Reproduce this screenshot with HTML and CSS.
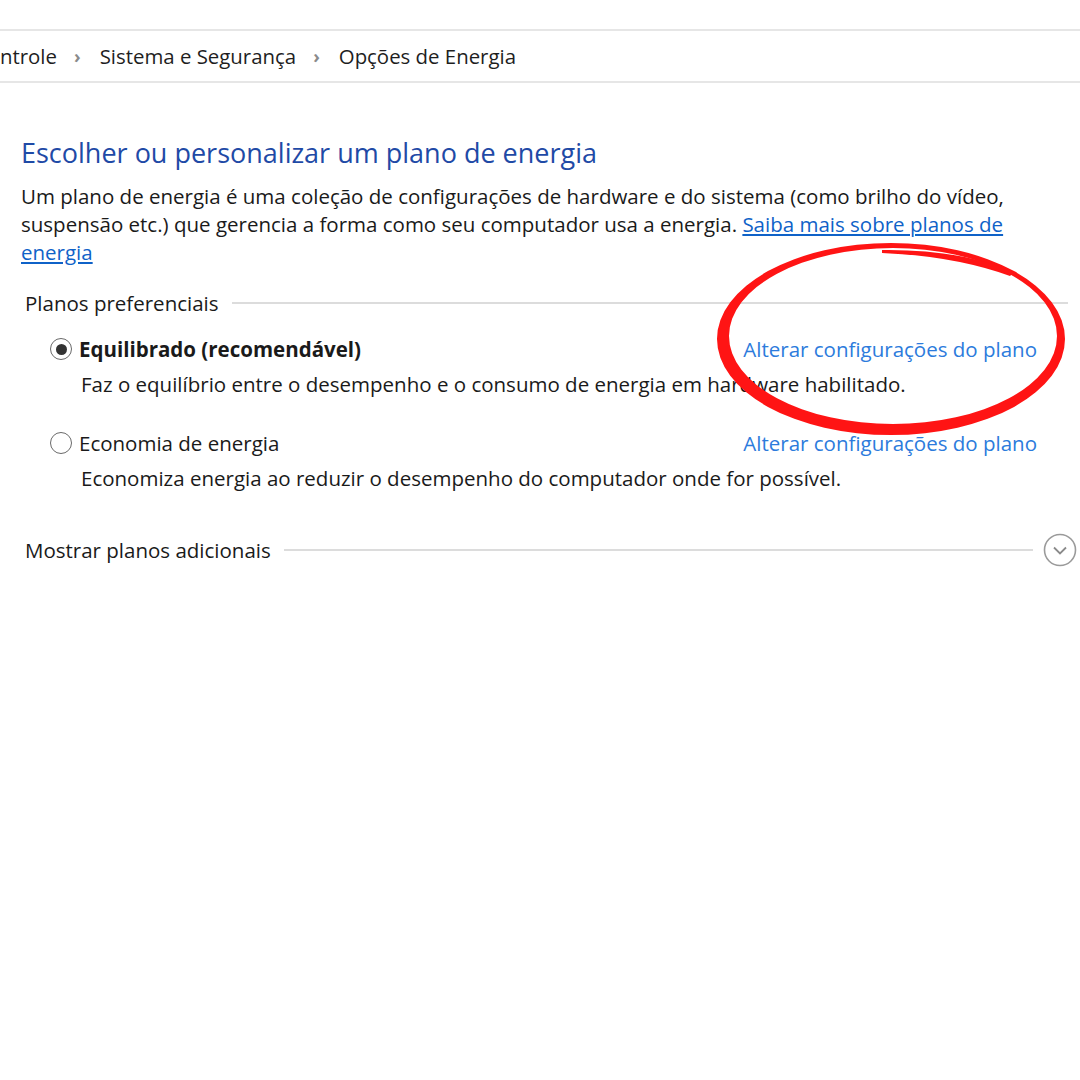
FILE: index.html
```html
<!DOCTYPE html>
<html lang="pt">
<head>
<meta charset="utf-8">
<link rel="stylesheet" href="styles.css">
</head>
<body>
<div class="page">
  <nav class="crumbs">
    <span class="crumb">ntrole</span>
    <span class="sep">›</span>
    <span class="crumb">Sistema e Segurança</span>
    <span class="sep">›</span>
    <span class="crumb">Opções de Energia</span>
  </nav>
  <main class="content">
    <h1 class="title">Escolher ou personalizar um plano de energia</h1>
    <p class="intro">Um plano de energia é uma coleção de configurações de hardware e do sistema (como brilho do vídeo, suspensão etc.) que gerencia a forma como seu computador usa a energia. <a class="link" href="#">Saiba mais sobre planos de energia</a></p>

    <div class="group-head">
      <span class="group-label">Planos preferenciais</span>
      <span class="rule"></span>
    </div>

    <div class="plan first">
      <div class="plan-row">
        <span class="radio checked"></span>
        <span class="plan-name bold">Equilibrado (recomendável)</span>
        <a class="plan-link" href="#">Alterar configurações do plano</a>
      </div>
      <div class="plan-desc">Faz o equilíbrio entre o desempenho e o consumo de energia em hardware habilitado.</div>
    </div>

    <div class="plan">
      <div class="plan-row">
        <span class="radio"></span>
        <span class="plan-name">Economia de energia</span>
        <a class="plan-link" href="#">Alterar configurações do plano</a>
      </div>
      <div class="plan-desc">Economiza energia ao reduzir o desempenho do computador onde for possível.</div>
    </div>

    <div class="group-head more">
      <span class="group-label">Mostrar planos adicionais</span>
      <span class="rule"></span>
      <span class="expand">
        <svg width="34" height="34" viewBox="0 0 34 34"><circle cx="17" cy="17" r="15.5" fill="none" stroke="#9a9a9a" stroke-width="1.6"/><path d="M11 14.5 L17 20.5 L23 14.5" fill="none" stroke="#8a8a8a" stroke-width="1.8"/></svg>
      </span>
    </div>
  </main>

  <svg class="circle-mark" width="1080" height="1080" viewBox="0 0 1080 1080">
    <path fill="#ff1414" fill-rule="evenodd" d="M717 339 A174 96 0 1 0 1065 339 A174 96 0 1 0 717 339 Z M729 336 A164 88 0 1 1 1057 336 A164 88 0 1 1 729 336 Z"/>
    <path fill="#ffffff" d="M968 246 Q 990 252 1010 262 L 1010 256 Q 990 246 968 243 Z"/>
    <path fill="#ff1414" d="M882 250 Q 960 249 1014 272 L 1010 276 Q 955 256 882 253 Z"/>
  </svg>
</div>
</body>
</html>
```

FILE: styles.css
```css
html, body {
  margin: 0;
  padding: 0;
  background: #ffffff;
}

.page {
  position: relative;
  width: 1080px;
  height: 1080px;
  overflow: hidden;
  font-family: "Open Sans", "Noto Sans", sans-serif;
  color: #1a1a1a;
}

.crumbs {
  margin-top: 29px;
  height: 50px;
  border-top: 2px solid #e6e6e6;
  border-bottom: 2px solid #e6e6e6;
  display: flex;
  align-items: center;
  font-size: 20.4px;
  color: #1e1e1e;
}

.crumb {
  white-space: nowrap;
}

.sep {
  color: #8a8a8a;
  font-size: 18px;
  font-weight: 700;
  margin: 0 19px 0 17px;
}

.content {
  padding: 0 0 0 21px;
}

.title {
  margin: 53px 0 0 0;
  font-size: 27px;
  font-weight: 400;
  color: #1f4aa6;
  line-height: 34px;
  white-space: nowrap;
}

.intro {
  margin: 12px 0 0 0;
  width: 1030px;
  font-size: 20.5px;
  line-height: 28px;
}

.link {
  color: #0f62c8;
  text-decoration: underline;
}

.group-head {
  display: flex;
  align-items: center;
  margin: 21px 12px 0 4px;
  font-size: 20.5px;
  height: 32px;
}

.group-label {
  white-space: nowrap;
}

.rule {
  flex: 1;
  height: 2px;
  background: #dcdcdc;
  margin-left: 13px;
}

.plan {
  margin-left: 29px;
  margin-right: 43px;
}

.plan.first {
  margin-top: 14px;
}

.plan-row {
  display: flex;
  align-items: center;
  height: 32px;
  font-size: 20.5px;
}

.plan + .plan {
  margin-top: 29px;
}

.radio {
  width: 22px;
  height: 22px;
  box-sizing: border-box;
  border: 1.5px solid #6a6a6a;
  border-radius: 50%;
  background: #fff;
  display: flex;
  align-items: center;
  justify-content: center;
  margin-right: 7px;
}

.radio.checked::after {
  content: "";
  width: 11px;
  height: 11px;
  border-radius: 50%;
  background: #333333;
}

.plan-name {
  flex: 1;
  white-space: nowrap;
}

.bold {
  font-weight: 700;
}

.plan-link {
  color: #2c7bdc;
  text-decoration: none;
  white-space: nowrap;
}

.plan-desc {
  margin-left: 31px;
  font-size: 20.5px;
  line-height: 28px;
  margin-top: 5px;
  white-space: nowrap;
}

.group-head.more {
  margin-top: 42px;
  margin-right: 3px;
}

.group-head.more .rule {
  margin-right: 10px;
}

.expand {
  display: flex;
}

.circle-mark {
  position: absolute;
  left: 0;
  top: 0;
  pointer-events: none;
}
```
